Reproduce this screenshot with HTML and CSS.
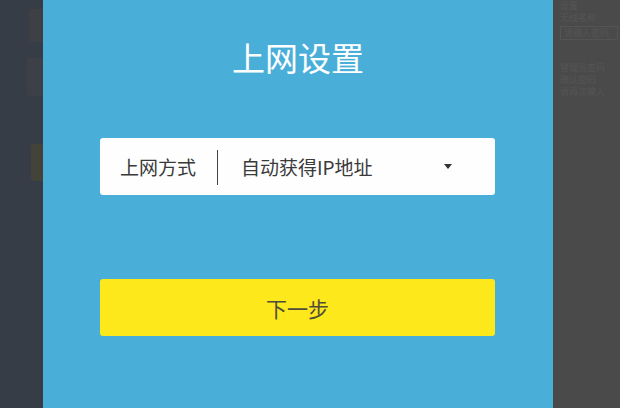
FILE: index.html
```html
<!DOCTYPE html>
<html lang="zh-CN">
<head>
<meta charset="utf-8">
<title>上网设置</title>
<link rel="stylesheet" href="styles.css">
</head>
<body>
<div class="screen">
  <aside class="side-left">
    <div class="ghost ghost-a"></div>
    <div class="ghost ghost-b"></div>
    <div class="ghost ghost-c"></div>
  </aside>
  <main class="modal">
    <h1 class="title">上网设置</h1>
    <div class="select">
      <span class="select-label">上网方式</span>
      <span class="select-divider"></span>
      <span class="select-value">自动获得IP地址</span>
      <span class="select-arrow"></span>
    </div>
    <button class="next-btn" type="button">下一步</button>
  </main>
  <aside class="side-right">
    <div class="faint-line">设置</div>
    <div class="faint-line">无线名称</div>
    <div class="faint-line boxed">请输入密码</div>
    <div class="faint-line gap">管理员密码</div>
    <div class="faint-line">确认密码</div>
    <div class="faint-line">请再次输入</div>
  </aside>
</div>
</body>
</html>
```
FILE: styles.css
```css
html, body {
  margin: 0;
  padding: 0;
}
body {
  width: 620px;
  height: 408px;
  overflow: hidden;
  font-family: "Noto Sans CJK SC", "Noto Sans", sans-serif;
}
.screen {
  display: flex;
  width: 620px;
  height: 408px;
}
.side-left {
  width: 43px;
  flex: none;
  background: #363d46;
  display: flex;
  flex-direction: column;
  align-items: flex-end;
  padding-top: 9px;
  box-sizing: border-box;
}
.ghost {
  border-radius: 3px 0 0 3px;
}
.ghost-a {
  width: 14px;
  height: 33px;
  background: #3e4046;
}
.ghost-b {
  width: 16px;
  height: 38px;
  margin-top: 16px;
  background: #3d4047;
}
.ghost-c {
  width: 12px;
  height: 37px;
  margin-top: 48px;
  background: #44433a;
}
.modal {
  width: 510px;
  flex: none;
  background: #4aafd8;
  display: flex;
  flex-direction: column;
  align-items: center;
  padding-top: 36px;
  box-sizing: border-box;
}
.title {
  margin: 0;
  font-size: 33px;
  line-height: 42px;
  font-weight: 400;
  color: #ffffff;
}
.select {
  margin-top: 60px;
  width: 395px;
  height: 57px;
  margin-left: -1px;
  background: #fefefe;
  border-radius: 3px;
  display: flex;
  align-items: center;
  padding-left: 20px;
  box-sizing: border-box;
  color: #3a3a3a;
}
.select-label {
  font-size: 19px;
  line-height: 24px;
}
.select-divider {
  width: 1px;
  height: 35px;
  background: #444444;
  margin-left: 21px;
  margin-top: 2px;
}
.select-value {
  margin-left: 23px;
  font-size: 19px;
  line-height: 24px;
}
.select-arrow {
  margin-left: auto;
  margin-right: 43px;
  width: 0;
  height: 0;
  border-left: 4.5px solid transparent;
  border-right: 4.5px solid transparent;
  border-top: 5px solid #333333;
}
.next-btn {
  margin-top: 84px;
  margin-left: -1px;
  width: 395px;
  height: 57px;
  border: none;
  border-radius: 3px;
  background: #fde81b;
  color: #4f4d3a;
  font-family: "Noto Sans CJK SC", "Noto Sans", sans-serif;
  font-size: 21px;
  padding: 0;
}
.side-right {
  width: 67px;
  flex: none;
  background: #4a4a4a;
  padding: 0 0 0 7px;
  box-sizing: border-box;
  display: flex;
  flex-direction: column;
  align-items: flex-start;
}
.faint-line {
  font-size: 9px;
  line-height: 12px;
  color: #555555;
  white-space: nowrap;
}
.boxed {
  border: 1px solid #545454;
  margin-top: 2px;
  padding: 0 8px 0 3px;
}
.gap {
  margin-top: 22px;
}
```
